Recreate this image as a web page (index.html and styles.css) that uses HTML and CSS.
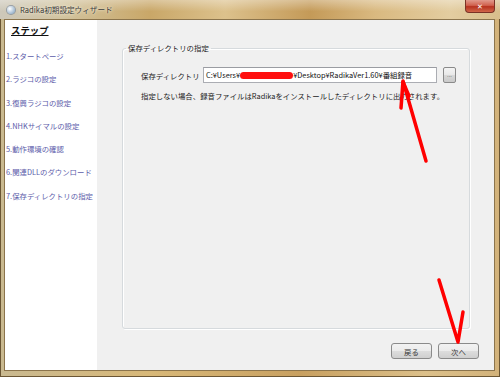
FILE: index.html
```html
<!DOCTYPE html>
<html>
  <head>
    <title>Radika初期設定ウィザード</title>
    <link rel="stylesheet" href="styles.css">
  </head>
  <body>
    <div class="window">
      <div class="titlebar">
        <span class="app-icon"></span>
        <span class="title">Radika初期設定ウィザード</span>
        <span class="close">✕</span>
      </div>

      <div class="frame">
        <div class="client">
          <nav class="steps">
            <h2>ステップ</h2>
            <ul>
              <li>1.スタートページ</li>
              <li>2.ラジコの設定</li>
              <li>3.復興ラジコの設定</li>
              <li>4.NHKサイマルの設定</li>
              <li>5.動作環境の確認</li>
              <li>6.関連DLLのダウンロード</li>
              <li>7.保存ディレクトリの指定</li>
            </ul>
          </nav>

          <div class="page">
            <fieldset class="group">
              <legend>保存ディレクトリの指定</legend>
              <div class="field-row">
                <label class="field-label">保存ディレクトリ</label>
                <div class="path-input">C:¥Users¥<span class="redact"></span>¥Desktop¥RadikaVer1.60¥番組録音</div>
                <button class="browse">...</button>
              </div>
              <p class="hint">指定しない場合、録音ファイルはRadikaをインストールしたディレクトリに出力されます。</p>
            </fieldset>

            <div class="buttons">
              <button class="btn">戻る</button>
              <button class="btn">次へ</button>
            </div>
          </div>
        </div>
      </div>

      <!-- red marks drawn over the screenshot -->
      <svg class="marks" width="500" height="377" viewBox="0 0 500 377">
        <path d="M401 108 L403 81 L426 161" />
        <path d="M403 82 L409 96" />
        <path d="M439 280 L458 342 L463 312" />
      </svg>
    </div>
  </body>
</html>
```

FILE: styles.css
```css
body {
  margin: 0;
  font-family: "Noto Sans CJK JP", "DejaVu Sans", sans-serif;
  font-size: 7.4px;
}

.window {
  position: relative;
  width: 500px;
  height: 377px;
  display: flex;
  flex-direction: column;
  background: linear-gradient(to right, #c9b990 0%, #d8b878 30%, #c8a060 60%, #dcc08a 85%, #d2b27a 100%);
  box-shadow: inset 1px 0 0 #6b5634, inset -1px 0 0 #6b5634, inset 0 -1px 0 #6b5634;
}

.titlebar {
  height: 19px;
  display: flex;
  align-items: center;
  background:
    linear-gradient(to bottom, rgba(255, 255, 255, 0.35), rgba(255, 255, 255, 0) 60%),
    linear-gradient(to right, #cdc8ba 0%, #d2c4a0 12%, #c9a768 30%, #dcc18c 45%, #c49a58 62%, #d9b980 75%, #e3cda0 90%, #d8be8c 100%);
}

.app-icon {
  width: 8px;
  height: 8px;
  margin-left: 7px;
  border-radius: 50%;
  background: radial-gradient(circle at 35% 35%, #ffffff, #9fb8d0 70%, #6a88a8);
  box-shadow: 0 0 0 1px rgba(90, 110, 140, 0.5);
}

.title {
  margin-left: 5px;
  font-size: 7.6px;
  color: #3a3a3a;
  text-shadow: 0 0 4px #f4ecd8, 0 0 2px #f4ecd8;
}

.close {
  margin-left: auto;
  margin-right: 5px;
  align-self: flex-start;
  width: 28px;
  height: 12px;
  line-height: 12px;
  text-align: center;
  font-size: 7px;
  font-weight: bold;
  color: #ffffff;
  border: 1px solid #7a3226;
  border-top: none;
  border-radius: 0 0 4px 4px;
  background: linear-gradient(to bottom, #e19a8c 0%, #d0614e 45%, #b7321f 55%, #d0664a 100%);
}

.frame {
  flex: 1;
  display: flex;
  padding: 0 5px 6px 4px;
}

.client {
  flex: 1;
  display: flex;
  border: 1px solid #8b744c;
  background: #f0f0f0;
}

.steps {
  width: 92px;
  background: #ffffff;
}

.steps h2 {
  margin: 4px 0 0 6px;
  font-size: 9.4px;
  font-weight: bold;
  line-height: 13px;
  text-decoration: underline;
  color: #111111;
}

.steps ul {
  list-style: none;
  margin: 7px 0 0 1px;
  padding: 0;
}

.steps li {
  line-height: 23.3px;
  color: #5c5caa;
  white-space: nowrap;
}

.page {
  flex: 1;
  display: flex;
  flex-direction: column;
  padding: 23px 15px 11px 0;
}

.group {
  flex: 1;
  margin: 0 9px 0 25px;
  padding: 14px 13px 0 18px;
  border: 1px solid #d6dadd;
  border-radius: 3px;
  box-shadow: inset 1px 1px 0 #ffffff, 1px 1px 0 #ffffff;
}

.group legend {
  margin-left: -15px;
  padding: 0 2px;
  line-height: 10px;
  color: #222222;
}

.field-row {
  display: flex;
  align-items: center;
  height: 16px;
}

.field-label {
  width: 62px;
  color: #222222;
}

.path-input {
  flex: 1;
  height: 14px;
  line-height: 14px;
  padding-left: 2px;
  border: 1px solid #abadb3;
  border-top-color: #9a9ca2;
  background: #ffffff;
  color: #111111;
  white-space: nowrap;
  overflow: hidden;
}

.redact {
  display: inline-block;
  width: 53px;
  height: 7px;
  vertical-align: middle;
  background: #ff1010;
  border-radius: 4px;
  filter: blur(0.6px);
}

.browse {
  width: 13px;
  height: 16px;
  margin-left: 6px;
  padding: 0;
  font-size: 6px;
  line-height: 10px;
  color: #444444;
  border: 1px solid #8a8a8a;
  border-radius: 2px;
  background: linear-gradient(to bottom, #f4f4f4 0%, #e8e8e8 50%, #d8d8d8 51%, #cacaca 100%);
}

.hint {
  margin: 8px 0 0 0;
  line-height: 10px;
  color: #222222;
}

.buttons {
  display: flex;
  justify-content: flex-end;
  gap: 6px;
  margin-top: 14px;
}

.btn {
  width: 41px;
  height: 16px;
  padding: 0;
  font-family: inherit;
  font-size: 7.4px;
  color: #333333;
  border: 1px solid #8a8a8a;
  border-radius: 3px;
  background: linear-gradient(to bottom, #f2f2f2 0%, #ebebeb 50%, #dddddd 51%, #cfcfcf 100%);
}

.marks {
  position: absolute;
  left: 0;
  top: 0;
  pointer-events: none;
}

.marks path {
  fill: none;
  stroke: #ff0000;
  stroke-width: 3.5;
  stroke-linecap: round;
  stroke-linejoin: round;
}
```
